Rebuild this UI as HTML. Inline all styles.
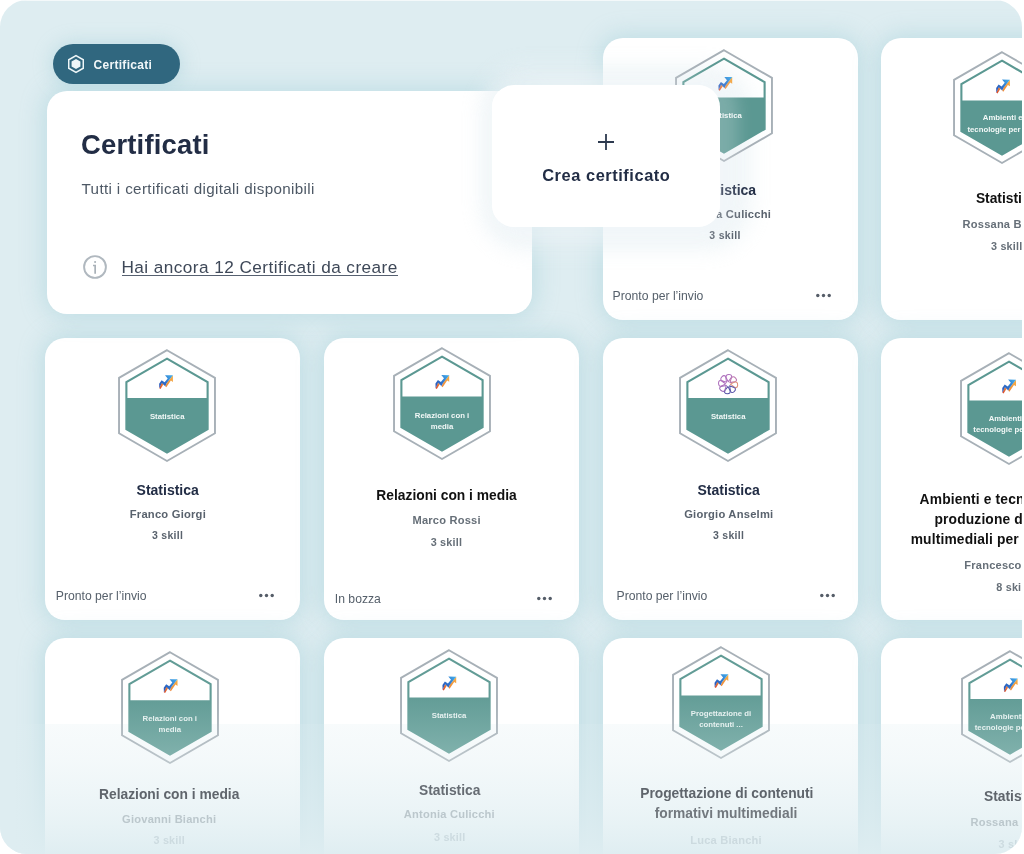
<!DOCTYPE html>
<html lang="it"><head><meta charset="utf-8"><title>Certificati</title><style>
html,body{margin:0;padding:0;background:#fff;}
body{width:1024px;height:854px;overflow:hidden;font-family:"Liberation Sans",sans-serif;}
#pg{will-change:transform;position:absolute;left:0;top:0;width:1022px;height:854px;overflow:hidden;border-radius:27px;background:#deedf1;}
.card{position:absolute;width:255.3px;height:281.5px;border-radius:20px;background:#fff;box-shadow:0 0 22px 4px rgba(145,197,210,.37);}
.hdr{position:absolute;left:47px;top:91px;width:485px;height:223px;border-radius:20px;background:#fff;box-shadow:0 0 22px 4px rgba(145,197,210,.37);}
.pillsh{position:absolute;left:53px;top:44px;width:127px;height:40px;border-radius:20px;box-shadow:0 0 18px 2px rgba(150,200,212,.4);}
.pill{position:absolute;left:53px;top:44px;width:127px;height:40px;border-radius:20px;background:#30677f;}
.pill svg{position:absolute;left:13px;top:9px;}
.pill span{position:absolute;left:40.5px;top:1px;line-height:40px;color:#f1f7f9;font-weight:bold;font-size:12px;letter-spacing:.3px;white-space:nowrap;}
.tx{position:absolute;white-space:nowrap;transform:translate(-50%,-50%);line-height:1;}
.lx{position:absolute;white-space:nowrap;transform:translate(0,-50%);line-height:1;}
.h1{font-size:27.4px;font-weight:bold;color:#222d45;letter-spacing:.2px;}
.sub{font-size:15.2px;color:#4d5865;letter-spacing:.36px;}
.lnk{font-size:17.2px;letter-spacing:.44px;color:#3e4858;}
.ul{position:absolute;left:121.5px;top:275px;width:276px;height:1px;background:#566070;}
.info{position:absolute;left:81.85px;top:254px;}
.bdg{position:absolute;overflow:visible;}
.bt{fill:#f2f8f7;font-weight:bold;font-family:"Liberation Sans",sans-serif;}
.t1{font-size:14px;font-weight:bold;color:#222d45;}
.t2{font-size:13.8px;font-weight:bold;color:#111;}
.nm{font-size:11.2px;font-weight:bold;color:#59626d;letter-spacing:.22px;}
.sk{font-size:10.5px;font-weight:bold;color:#59626d;letter-spacing:.3px;}
.nm2{font-size:11.1px;font-weight:bold;color:#666f78;letter-spacing:.2px;}
.t3{font-size:13.8px;font-weight:bold;color:#5f656c;}
.t3b{color:#72787e;}
.nm3{font-size:11.1px;font-weight:bold;color:#bbc7cc;letter-spacing:.22px;}
.sk3{font-size:10.8px;font-weight:bold;color:#cddbe0;letter-spacing:.2px;}
.btf{fill:#e6f1f0;}
.sk2{font-size:10.8px;font-weight:bold;color:#666f78;letter-spacing:.2px;}
.st{font-size:12.2px;color:#56606b;}
.st2{font-size:12.2px;color:#56606b;}
.dots{position:absolute;fill:#555d68;}
.creah{position:absolute;left:492px;top:85px;width:228px;height:141.5px;border-radius:22px;box-shadow:10px 2px 20px 22px rgba(232,242,245,.58);}
.crea{position:absolute;left:492px;top:85px;width:228px;height:141.5px;border-radius:22px;background:#fff;box-shadow:6px 2px 16px 12px rgba(240,247,249,.22);}
.plus{position:absolute;left:597.2px;top:132.7px;}
.cr{font-size:16.4px;font-weight:bold;color:#222d45;letter-spacing:.55px;}
.fade{position:absolute;left:0;top:723.5px;width:1024px;height:130.5px;background:linear-gradient(to bottom,rgba(222,237,241,.22) 0,rgba(222,237,241,.35) 29%,rgba(222,237,241,.5) 52%,rgba(222,237,241,.64) 70%,rgba(222,237,241,.8) 86%,rgba(222,237,241,.96) 100%);}
.tedge{position:absolute;left:0;top:0;width:1022px;height:1px;background:rgba(255,255,255,.65);}
</style></head><body><div id="pg">
<svg width="0" height="0" style="position:absolute"><defs><linearGradient id="gt" gradientUnits="userSpaceOnUse" x1="0" y1="50" x2="0" y2="116"><stop offset="0" stop-color="#629c96"/><stop offset="1" stop-color="#84b4af"/></linearGradient><linearGradient id="gs" gradientUnits="userSpaceOnUse" x1="0" y1="60" x2="0" y2="116"><stop offset="0" stop-color="#a7b0b7"/><stop offset="1" stop-color="#bcc6cb"/></linearGradient><linearGradient id="go" gradientUnits="userSpaceOnUse" x1="1" y1="13.5" x2="13" y2="2"><stop offset="0" stop-color="#d9482c"/><stop offset=".35" stop-color="#ee8b3a"/><stop offset="1" stop-color="#f4ab45"/></linearGradient><linearGradient id="gb" gradientUnits="userSpaceOnUse" x1="1" y1="12" x2="12" y2="1"><stop offset="0" stop-color="#2a56b8"/><stop offset=".5" stop-color="#2f74cc"/><stop offset="1" stop-color="#41a6e6"/></linearGradient></defs></svg>
<div class="pillsh"></div>
<div class="card" style="left:602.6px;top:38.0px"></div>
<div class="card" style="left:881.4px;top:38.0px"></div>
<div class="card" style="left:45.0px;top:338.0px"></div>
<div class="card" style="left:323.8px;top:338.0px"></div>
<div class="card" style="left:602.6px;top:338.0px"></div>
<div class="card" style="left:881.4px;top:338.0px"></div>
<div class="card" style="left:45.0px;top:637.5px"></div>
<div class="card" style="left:323.8px;top:637.5px"></div>
<div class="card" style="left:602.6px;top:637.5px"></div>
<div class="card" style="left:881.4px;top:637.5px"></div>
<div class="hdr"></div>
<div class="creah"></div>
<div class="pill"><svg width="20" height="22" viewBox="0 0 20 22"><polygon points="10.00,2.60 17.27,6.80 17.27,15.20 10.00,19.40 2.73,15.20 2.73,6.80" fill="none" stroke="#eef6f8" stroke-width="1.5"/><polygon points="10.00,5.90 14.42,8.45 14.42,13.55 10.00,16.10 5.58,13.55 5.58,8.45" fill="#eef6f8"/></svg><span>Certificati</span></div>
<div class="lx h1" style="left:81.0px;top:144.5px;">Certificati</div>
<div class="lx sub" style="left:81.5px;top:189.4px;">Tutti i certificati digitali disponibili</div>
<svg class="info" width="26" height="26" viewBox="0 0 26 26"><circle cx="13" cy="13" r="10.9" fill="none" stroke="#b0b8bf" stroke-width="1.9"/><circle cx="13.1" cy="8" r="1.05" fill="#a9b1b8"/><path d="M11 10.7h3v9h-1.7v-7.5h-1.3z" fill="#a9b1b8"/></svg>
<div class="lx lnk" style="left:121.5px;top:267.5px;">Hai ancora 12 Certificati da creare</div>
<div class="ul"></div>
<svg class="bdg" style="left:664.0px;top:45.8px" width="120" height="119.2" viewBox="0 0 120 119.2"><polygon points="60.00,4.20 107.98,31.90 107.98,87.30 60.00,115.00 12.02,87.30 12.02,31.90" fill="none" stroke="#a7b0b7" stroke-width="1.9"/><polygon points="19.38,51.50 100.62,51.50 100.62,83.05 60.00,106.50 19.38,83.05" fill="#5b9892"/><polygon points="60.00,12.70 100.62,36.15 100.62,83.05 60.00,106.50 19.38,83.05 19.38,36.15" fill="none" stroke="#5b9892" stroke-width="2.1"/><g transform="translate(54.30 30.80)"><polygon points="13.9,0.3 13.9,6.9 11.9,5.6 7.3,12.3 4.3,9.6 1.5,14 0.3,13.3 2.7,7.6 6.45,11.3 7.4,8.4" fill="url(#go)"/><polygon points="6,0.15 13.9,0.3 7.4,8.6 6.3,11.2 2.8,7.9 0.3,13.3 0.15,8.65 2.6,5.2 5.6,7.2 8.7,3.4" fill="url(#gb)"/></g><text x="60.5" y="72.0" text-anchor="middle" class="bt" style="font-size:7.8px">Statistica</text></svg>
<div class="tx t1" style="left:725.0px;top:189.9px;">Statistica</div>
<div class="tx nm" style="left:725.2px;top:215.0px;">Antonia Culicchi</div>
<div class="tx sk" style="left:725.0px;top:234.8px;">3 skill</div>
<div class="lx st" style="left:612.6px;top:295.9px;">Pronto per l’invio</div>
<svg class="dots" style="left:816.0px;top:293.0px" width="16" height="5" viewBox="0 0 16 5"><circle cx="1.8" cy="2.5" r="1.7"/><circle cx="7.5" cy="2.5" r="1.7"/><circle cx="13.2" cy="2.5" r="1.7"/></svg>
<svg class="bdg" style="left:942.3px;top:47.8px" width="120" height="119.2" viewBox="0 0 120 119.2"><polygon points="60.00,4.20 107.98,31.90 107.98,87.30 60.00,115.00 12.02,87.30 12.02,31.90" fill="none" stroke="#a7b0b7" stroke-width="1.9"/><polygon points="19.38,52.50 100.62,52.50 100.62,83.05 60.00,106.50 19.38,83.05" fill="#5b9892"/><polygon points="60.00,12.70 100.62,36.15 100.62,83.05 60.00,106.50 19.38,83.05 19.38,36.15" fill="none" stroke="#5b9892" stroke-width="2.1"/><g transform="translate(54.00 31.40)"><polygon points="13.9,0.3 13.9,6.9 11.9,5.6 7.3,12.3 4.3,9.6 1.5,14 0.3,13.3 2.7,7.6 6.45,11.3 7.4,8.4" fill="url(#go)"/><polygon points="6,0.15 13.9,0.3 7.4,8.6 6.3,11.2 2.8,7.9 0.3,13.3 0.15,8.65 2.6,5.2 5.6,7.2 8.7,3.4" fill="url(#gb)"/></g><text x="60.7" y="72.1" text-anchor="middle" class="bt" style="font-size:7.8px">Ambienti e</text><text x="60.7" y="84.4" text-anchor="middle" class="bt" style="font-size:7.8px">tecnologie per la ...</text></svg>
<div class="lx t2" style="left:975.9px;top:198.6px;">Statistica</div>
<div class="lx nm2" style="left:962.6px;top:225.2px;">Rossana Bassi</div>
<div class="lx sk2" style="left:991.0px;top:246.0px;">3 skill</div>
<svg class="bdg" style="left:107.0px;top:345.6px" width="120" height="119.2" viewBox="0 0 120 119.2"><polygon points="60.00,4.20 107.98,31.90 107.98,87.30 60.00,115.00 12.02,87.30 12.02,31.90" fill="none" stroke="#a7b0b7" stroke-width="1.9"/><polygon points="19.38,52.00 100.62,52.00 100.62,83.05 60.00,106.50 19.38,83.05" fill="#5b9892"/><polygon points="60.00,12.70 100.62,36.15 100.62,83.05 60.00,106.50 19.38,83.05 19.38,36.15" fill="none" stroke="#5b9892" stroke-width="2.1"/><g transform="translate(52.00 29.00)"><polygon points="13.9,0.3 13.9,6.9 11.9,5.6 7.3,12.3 4.3,9.6 1.5,14 0.3,13.3 2.7,7.6 6.45,11.3 7.4,8.4" fill="url(#go)"/><polygon points="6,0.15 13.9,0.3 7.4,8.6 6.3,11.2 2.8,7.9 0.3,13.3 0.15,8.65 2.6,5.2 5.6,7.2 8.7,3.4" fill="url(#gb)"/></g><text x="60.2" y="73.0" text-anchor="middle" class="bt" style="font-size:7.8px">Statistica</text></svg>
<div class="tx t1" style="left:167.7px;top:489.9px;">Statistica</div>
<div class="tx nm" style="left:167.9px;top:515.4px;">Franco Giorgi</div>
<div class="tx sk" style="left:167.6px;top:535.0px;">3 skill</div>
<div class="lx st" style="left:55.8px;top:596.3px;">Pronto per l’invio</div>
<svg class="dots" style="left:258.5px;top:593.4px" width="16" height="5" viewBox="0 0 16 5"><circle cx="1.8" cy="2.5" r="1.7"/><circle cx="7.5" cy="2.5" r="1.7"/><circle cx="13.2" cy="2.5" r="1.7"/></svg>
<svg class="bdg" style="left:382.3px;top:344.1px" width="120" height="119.2" viewBox="0 0 120 119.2"><polygon points="60.00,4.20 107.98,31.90 107.98,87.30 60.00,115.00 12.02,87.30 12.02,31.90" fill="none" stroke="#a7b0b7" stroke-width="1.9"/><polygon points="19.38,52.50 100.62,52.50 100.62,83.05 60.00,106.50 19.38,83.05" fill="#5b9892"/><polygon points="60.00,12.70 100.62,36.15 100.62,83.05 60.00,106.50 19.38,83.05 19.38,36.15" fill="none" stroke="#5b9892" stroke-width="2.1"/><g transform="translate(53.30 30.90)"><polygon points="13.9,0.3 13.9,6.9 11.9,5.6 7.3,12.3 4.3,9.6 1.5,14 0.3,13.3 2.7,7.6 6.45,11.3 7.4,8.4" fill="url(#go)"/><polygon points="6,0.15 13.9,0.3 7.4,8.6 6.3,11.2 2.8,7.9 0.3,13.3 0.15,8.65 2.6,5.2 5.6,7.2 8.7,3.4" fill="url(#gb)"/></g><text x="60.0" y="73.7" text-anchor="middle" class="bt" style="font-size:7.8px">Relazioni con i</text><text x="60.0" y="84.7" text-anchor="middle" class="bt" style="font-size:7.8px">media</text></svg>
<div class="tx t2" style="left:446.5px;top:495.7px;">Relazioni con i media</div>
<div class="tx nm2" style="left:446.6px;top:521.4px;">Marco Rossi</div>
<div class="tx sk2" style="left:446.4px;top:541.8px;">3 skill</div>
<div class="lx st2" style="left:334.8px;top:599.0px;">In bozza</div>
<svg class="dots" style="left:537.0px;top:595.9px" width="16" height="5" viewBox="0 0 16 5"><circle cx="1.8" cy="2.5" r="1.7"/><circle cx="7.5" cy="2.5" r="1.7"/><circle cx="13.2" cy="2.5" r="1.7"/></svg>
<svg class="bdg" style="left:668.3px;top:345.6px" width="120" height="119.2" viewBox="0 0 120 119.2"><polygon points="60.00,4.20 107.98,31.90 107.98,87.30 60.00,115.00 12.02,87.30 12.02,31.90" fill="none" stroke="#a7b0b7" stroke-width="1.9"/><polygon points="19.38,52.00 100.62,52.00 100.62,83.05 60.00,106.50 19.38,83.05" fill="#5b9892"/><polygon points="60.00,12.70 100.62,36.15 100.62,83.05 60.00,106.50 19.38,83.05 19.38,36.15" fill="none" stroke="#5b9892" stroke-width="2.1"/><g transform="translate(60.10 38.10)" fill="none" stroke-width="1.05" stroke-linejoin="round" opacity=".9"><path transform="rotate(0)" d="M0.2,-2.3 C1.4,-4.6 4,-6.4 3.5,-8.2 C3,-10 -0.8,-10 -1.9,-8.5 C-2.9,-7 -0.8,-4.4 0.2,-2.3Z" stroke="#a660b6"/><path transform="rotate(45)" d="M0.2,-2.3 C1.4,-4.6 4,-6.4 3.5,-8.2 C3,-10 -0.8,-10 -1.9,-8.5 C-2.9,-7 -0.8,-4.4 0.2,-2.3Z" stroke="#b468a8"/><path transform="rotate(90)" d="M0.2,-2.3 C1.4,-4.6 4,-6.4 3.5,-8.2 C3,-10 -0.8,-10 -1.9,-8.5 C-2.9,-7 -0.8,-4.4 0.2,-2.3Z" stroke="#d9826a"/><path transform="rotate(135)" d="M0.2,-2.3 C1.4,-4.6 4,-6.4 3.5,-8.2 C3,-10 -0.8,-10 -1.9,-8.5 C-2.9,-7 -0.8,-4.4 0.2,-2.3Z" stroke="#4a45a2"/><path transform="rotate(180)" d="M0.2,-2.3 C1.4,-4.6 4,-6.4 3.5,-8.2 C3,-10 -0.8,-10 -1.9,-8.5 C-2.9,-7 -0.8,-4.4 0.2,-2.3Z" stroke="#3f3d9c"/><path transform="rotate(225)" d="M0.2,-2.3 C1.4,-4.6 4,-6.4 3.5,-8.2 C3,-10 -0.8,-10 -1.9,-8.5 C-2.9,-7 -0.8,-4.4 0.2,-2.3Z" stroke="#9058b0"/><path transform="rotate(270)" d="M0.2,-2.3 C1.4,-4.6 4,-6.4 3.5,-8.2 C3,-10 -0.8,-10 -1.9,-8.5 C-2.9,-7 -0.8,-4.4 0.2,-2.3Z" stroke="#a660b6"/><path transform="rotate(315)" d="M0.2,-2.3 C1.4,-4.6 4,-6.4 3.5,-8.2 C3,-10 -0.8,-10 -1.9,-8.5 C-2.9,-7 -0.8,-4.4 0.2,-2.3Z" stroke="#a660b6"/></g><text x="60.2" y="73.0" text-anchor="middle" class="bt" style="font-size:7.8px">Statistica</text></svg>
<div class="tx t1" style="left:728.6px;top:489.9px;">Statistica</div>
<div class="tx nm" style="left:728.8px;top:515.4px;">Giorgio Anselmi</div>
<div class="tx sk" style="left:728.6px;top:535.0px;">3 skill</div>
<div class="lx st" style="left:616.5px;top:596.3px;">Pronto per l’invio</div>
<svg class="dots" style="left:819.5px;top:593.4px" width="16" height="5" viewBox="0 0 16 5"><circle cx="1.8" cy="2.5" r="1.7"/><circle cx="7.5" cy="2.5" r="1.7"/><circle cx="13.2" cy="2.5" r="1.7"/></svg>
<svg class="bdg" style="left:948.9px;top:348.8px" width="120" height="119.2" viewBox="0 0 120 119.2"><polygon points="60.00,4.20 107.98,31.90 107.98,87.30 60.00,115.00 12.02,87.30 12.02,31.90" fill="none" stroke="#a7b0b7" stroke-width="1.9"/><polygon points="19.38,51.40 100.62,51.40 100.62,83.05 60.00,106.50 19.38,83.05" fill="#5b9892"/><polygon points="60.00,12.70 100.62,36.15 100.62,83.05 60.00,106.50 19.38,83.05 19.38,36.15" fill="none" stroke="#5b9892" stroke-width="2.1"/><g transform="translate(53.10 30.40)"><polygon points="13.9,0.3 13.9,6.9 11.9,5.6 7.3,12.3 4.3,9.6 1.5,14 0.3,13.3 2.7,7.6 6.45,11.3 7.4,8.4" fill="url(#go)"/><polygon points="6,0.15 13.9,0.3 7.4,8.6 6.3,11.2 2.8,7.9 0.3,13.3 0.15,8.65 2.6,5.2 5.6,7.2 8.7,3.4" fill="url(#gb)"/></g><text x="59.6" y="71.8" text-anchor="middle" class="bt" style="font-size:7.8px">Ambienti e</text><text x="59.6" y="83.4" text-anchor="middle" class="bt" style="font-size:7.8px">tecnologie per la ...</text></svg>
<div class="lx t2" style="left:919.6px;top:499.7px;letter-spacing:.15px">Ambienti e tecnologie per la</div>
<div class="lx t2" style="left:934.5px;top:520.3px;letter-spacing:.15px">produzione di contenuti</div>
<div class="lx t2" style="left:910.7px;top:539.9px;letter-spacing:.15px">multimediali per la formazione</div>
<div class="lx nm2" style="left:964.3px;top:566.3px;">Francesco Bianchi</div>
<div class="lx sk2" style="left:996.3px;top:587.1px;">8 skill</div>
<div class="fade"></div>
<svg class="bdg" style="left:109.6px;top:648.3px" width="120" height="119.2" viewBox="0 0 120 119.2"><polygon points="60.00,4.20 107.98,31.90 107.98,87.30 60.00,115.00 12.02,87.30 12.02,31.90" fill="none" stroke="url(#gs)" stroke-width="1.9"/><polygon points="19.38,52.30 100.62,52.30 100.62,83.05 60.00,106.50 19.38,83.05" fill="url(#gt)"/><polygon points="60.00,12.70 100.62,36.15 100.62,83.05 60.00,106.50 19.38,83.05 19.38,36.15" fill="none" stroke="url(#gt)" stroke-width="2.1"/><g transform="translate(53.60 31.00)"><polygon points="13.9,0.3 13.9,6.9 11.9,5.6 7.3,12.3 4.3,9.6 1.5,14 0.3,13.3 2.7,7.6 6.45,11.3 7.4,8.4" fill="url(#go)"/><polygon points="6,0.15 13.9,0.3 7.4,8.6 6.3,11.2 2.8,7.9 0.3,13.3 0.15,8.65 2.6,5.2 5.6,7.2 8.7,3.4" fill="url(#gb)"/></g><text x="59.8" y="72.8" text-anchor="middle" class="bt btf" style="font-size:7.8px">Relazioni con i</text><text x="59.8" y="84.5" text-anchor="middle" class="bt btf" style="font-size:7.8px">media</text></svg>
<div class="tx t3" style="left:169.2px;top:794.5px;">Relazioni con i media</div>
<div class="tx nm3" style="left:169.2px;top:820.0px;">Giovanni Bianchi</div>
<div class="tx sk3" style="left:169.2px;top:840.2px;">3 skill</div>
<svg class="bdg" style="left:389.3px;top:646.2px" width="120" height="119.2" viewBox="0 0 120 119.2"><polygon points="60.00,4.20 107.98,31.90 107.98,87.30 60.00,115.00 12.02,87.30 12.02,31.90" fill="none" stroke="url(#gs)" stroke-width="1.9"/><polygon points="19.38,51.40 100.62,51.40 100.62,83.05 60.00,106.50 19.38,83.05" fill="url(#gt)"/><polygon points="60.00,12.70 100.62,36.15 100.62,83.05 60.00,106.50 19.38,83.05 19.38,36.15" fill="none" stroke="url(#gt)" stroke-width="2.1"/><g transform="translate(53.30 30.40)"><polygon points="13.9,0.3 13.9,6.9 11.9,5.6 7.3,12.3 4.3,9.6 1.5,14 0.3,13.3 2.7,7.6 6.45,11.3 7.4,8.4" fill="url(#go)"/><polygon points="6,0.15 13.9,0.3 7.4,8.6 6.3,11.2 2.8,7.9 0.3,13.3 0.15,8.65 2.6,5.2 5.6,7.2 8.7,3.4" fill="url(#gb)"/></g><text x="60.0" y="72.4" text-anchor="middle" class="bt btf" style="font-size:7.8px">Statistica</text></svg>
<div class="tx t3" style="left:449.7px;top:791.2px;color:#666c73">Statistica</div>
<div class="tx nm3" style="left:449.4px;top:815.2px;">Antonia Culicchi</div>
<div class="tx sk3" style="left:449.7px;top:836.8px;">3 skill</div>
<svg class="bdg" style="left:661.3px;top:642.6px" width="120" height="119.2" viewBox="0 0 120 119.2"><polygon points="60.00,4.20 107.98,31.90 107.98,87.30 60.00,115.00 12.02,87.30 12.02,31.90" fill="none" stroke="url(#gs)" stroke-width="1.9"/><polygon points="19.38,52.40 100.62,52.40 100.62,83.05 60.00,106.50 19.38,83.05" fill="url(#gt)"/><polygon points="60.00,12.70 100.62,36.15 100.62,83.05 60.00,106.50 19.38,83.05 19.38,36.15" fill="none" stroke="url(#gt)" stroke-width="2.1"/><g transform="translate(53.40 31.00)"><polygon points="13.9,0.3 13.9,6.9 11.9,5.6 7.3,12.3 4.3,9.6 1.5,14 0.3,13.3 2.7,7.6 6.45,11.3 7.4,8.4" fill="url(#go)"/><polygon points="6,0.15 13.9,0.3 7.4,8.6 6.3,11.2 2.8,7.9 0.3,13.3 0.15,8.65 2.6,5.2 5.6,7.2 8.7,3.4" fill="url(#gb)"/></g><text x="60.0" y="72.6" text-anchor="middle" class="bt btf" style="font-size:7.8px">Progettazione di</text><text x="60.0" y="84.3" text-anchor="middle" class="bt btf" style="font-size:7.8px">contenuti ...</text></svg>
<div class="tx t3" style="left:726.8px;top:794.0px;">Progettazione di contenuti</div>
<div class="tx t3 t3b" style="left:726.0px;top:813.8px;">formativi multimediali</div>
<div class="tx nm3" style="left:726.0px;top:841.0px;color:#ccdadf">Luca Bianchi</div>
<svg class="bdg" style="left:949.9px;top:646.5px" width="120" height="119.2" viewBox="0 0 120 119.2"><polygon points="60.00,4.20 107.98,31.90 107.98,87.30 60.00,115.00 12.02,87.30 12.02,31.90" fill="none" stroke="url(#gs)" stroke-width="1.9"/><polygon points="19.38,51.90 100.62,51.90 100.62,83.05 60.00,106.50 19.38,83.05" fill="url(#gt)"/><polygon points="60.00,12.70 100.62,36.15 100.62,83.05 60.00,106.50 19.38,83.05 19.38,36.15" fill="none" stroke="url(#gt)" stroke-width="2.1"/><g transform="translate(53.70 31.10)"><polygon points="13.9,0.3 13.9,6.9 11.9,5.6 7.3,12.3 4.3,9.6 1.5,14 0.3,13.3 2.7,7.6 6.45,11.3 7.4,8.4" fill="url(#go)"/><polygon points="6,0.15 13.9,0.3 7.4,8.6 6.3,11.2 2.8,7.9 0.3,13.3 0.15,8.65 2.6,5.2 5.6,7.2 8.7,3.4" fill="url(#gb)"/></g><text x="60.0" y="71.8" text-anchor="middle" class="bt btf" style="font-size:7.8px">Ambienti e</text><text x="60.0" y="83.1" text-anchor="middle" class="bt btf" style="font-size:7.8px">tecnologie per la ...</text></svg>
<div class="lx t3" style="left:984.0px;top:796.6px;">Statistica</div>
<div class="lx nm3" style="left:970.5px;top:823.0px;">Rossana Bassi</div>
<div class="lx sk3" style="left:998.6px;top:843.5px;">3 skill</div>
<div class="tedge"></div>
<div class="crea"></div>
<svg class="plus" width="18" height="18" viewBox="0 0 18 18"><path d="M9 1v16M1 9h16" stroke="#2d3a4f" stroke-width="1.8" fill="none"/></svg>
<div class="tx cr" style="left:606.3px;top:174.7px;">Crea certificato</div>
</div></body></html>
